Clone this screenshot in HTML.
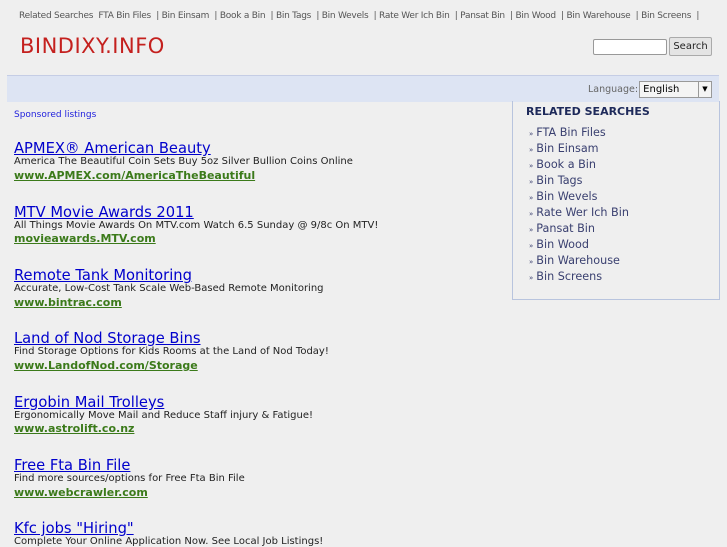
<!DOCTYPE html><html><head><style>
body{margin:0;background:#efefef;font-family:"DejaVu Sans","Liberation Sans",sans-serif;width:727px;height:545px;overflow:hidden;position:relative}
.a{position:absolute;white-space:nowrap}
.top{left:19px;top:11px;font-size:9px;color:#555;letter-spacing:-0.25px}
.logo{left:20px;top:34px;font-size:21px;color:#c4201e;letter-spacing:0.5px}
.inp{left:593px;top:39px;width:72px;height:14px;border:1px solid #999;background:#fff;border-radius:2px}
.btn{left:669px;top:37px;width:41px;height:17px;border:1px solid #aaa;background:#e4e4e4;font-size:10px;color:#222;text-align:center;line-height:17px;border-radius:2px}
.band{left:7px;top:75px;width:712px;height:26px;background:#dde4f3;border-top:1px solid #c5cde5}
.lang{left:588px;top:84px;font-size:9.5px;color:#666}
.sel{left:639px;top:81px;width:71px;height:15px;border:1px solid #999;background:#f4f4f4;font-size:10px;line-height:15px}
.box{left:512px;top:101px;width:206px;height:198px;border:1px solid #b8c4de;border-top:none}
.rh{left:526px;top:105px;font-size:11px;font-weight:bold;color:#1e2a5a}
.li{left:529px;font-size:11.2px;color:#3a4070}
.li b{font-size:7px;font-weight:normal;margin-right:3px}
.sp{left:14px;top:110px;font-size:9px;color:#2222dd}
.t{left:14px;font-size:14.7px;color:#0000cc;text-decoration:underline}
.d{left:14px;font-size:10px;color:#222}
.u{left:14px;font-size:11px;font-weight:bold;color:#3b7a1a;text-decoration:underline}
</style></head><body>
<div class="a top">Related Searches &nbsp;FTA Bin Files &nbsp;| Bin Einsam &nbsp;| Book a Bin &nbsp;| Bin Tags &nbsp;| Bin Wevels &nbsp;| Rate Wer Ich Bin &nbsp;| Pansat Bin &nbsp;| Bin Wood &nbsp;| Bin Warehouse &nbsp;| Bin Screens &nbsp;|</div>
<div class="a logo">BINDIXY.INFO</div>
<div class="a inp"></div><div class="a btn">Search</div>
<div class="a band"></div>
<div class="a lang">Language:</div>
<div class="a sel">&nbsp;English<span style="position:absolute;right:0;top:0;width:12px;height:15px;border-left:1px solid #999;font-size:7px;text-align:center">▼</span></div>
<div class="a box"></div>
<div class="a rh">RELATED SEARCHES</div>
<div class="a li" style="top:126px"><b>»</b>FTA Bin Files</div>
<div class="a li" style="top:142px"><b>»</b>Bin Einsam</div>
<div class="a li" style="top:158px"><b>»</b>Book a Bin</div>
<div class="a li" style="top:174px"><b>»</b>Bin Tags</div>
<div class="a li" style="top:190px"><b>»</b>Bin Wevels</div>
<div class="a li" style="top:206px"><b>»</b>Rate Wer Ich Bin</div>
<div class="a li" style="top:222px"><b>»</b>Pansat Bin</div>
<div class="a li" style="top:238px"><b>»</b>Bin Wood</div>
<div class="a li" style="top:254px"><b>»</b>Bin Warehouse</div>
<div class="a li" style="top:270px"><b>»</b>Bin Screens</div>
<div class="a sp">Sponsored listings</div>
<div class="a t" style="top:140px">APMEX® American Beauty</div>
<div class="a d" style="top:156px">America The Beautiful Coin Sets Buy 5oz Silver Bullion Coins Online</div>
<div class="a u" style="top:169px">www.APMEX.com/AmericaTheBeautiful</div>
<div class="a t" style="top:204px">MTV Movie Awards 2011</div>
<div class="a d" style="top:220px">All Things Movie Awards On MTV.com Watch 6.5 Sunday @ 9/8c On MTV!</div>
<div class="a u" style="top:232px">movieawards.MTV.com</div>
<div class="a t" style="top:267px">Remote Tank Monitoring</div>
<div class="a d" style="top:283px">Accurate, Low-Cost Tank Scale Web-Based Remote Monitoring</div>
<div class="a u" style="top:296px">www.bintrac.com</div>
<div class="a t" style="top:330px">Land of Nod Storage Bins</div>
<div class="a d" style="top:346px">Find Storage Options for Kids Rooms at the Land of Nod Today!</div>
<div class="a u" style="top:359px">www.LandofNod.com/Storage</div>
<div class="a t" style="top:394px">Ergobin Mail Trolleys</div>
<div class="a d" style="top:410px">Ergonomically Move Mail and Reduce Staff injury &amp; Fatigue!</div>
<div class="a u" style="top:422px">www.astrolift.co.nz</div>
<div class="a t" style="top:457px">Free Fta Bin File</div>
<div class="a d" style="top:473px">Find more sources/options for Free Fta Bin File</div>
<div class="a u" style="top:486px">www.webcrawler.com</div>
<div class="a t" style="top:520px">Kfc jobs "Hiring"</div>
<div class="a d" style="top:536px">Complete Your Online Application Now. See Local Job Listings!</div>
</body></html>
